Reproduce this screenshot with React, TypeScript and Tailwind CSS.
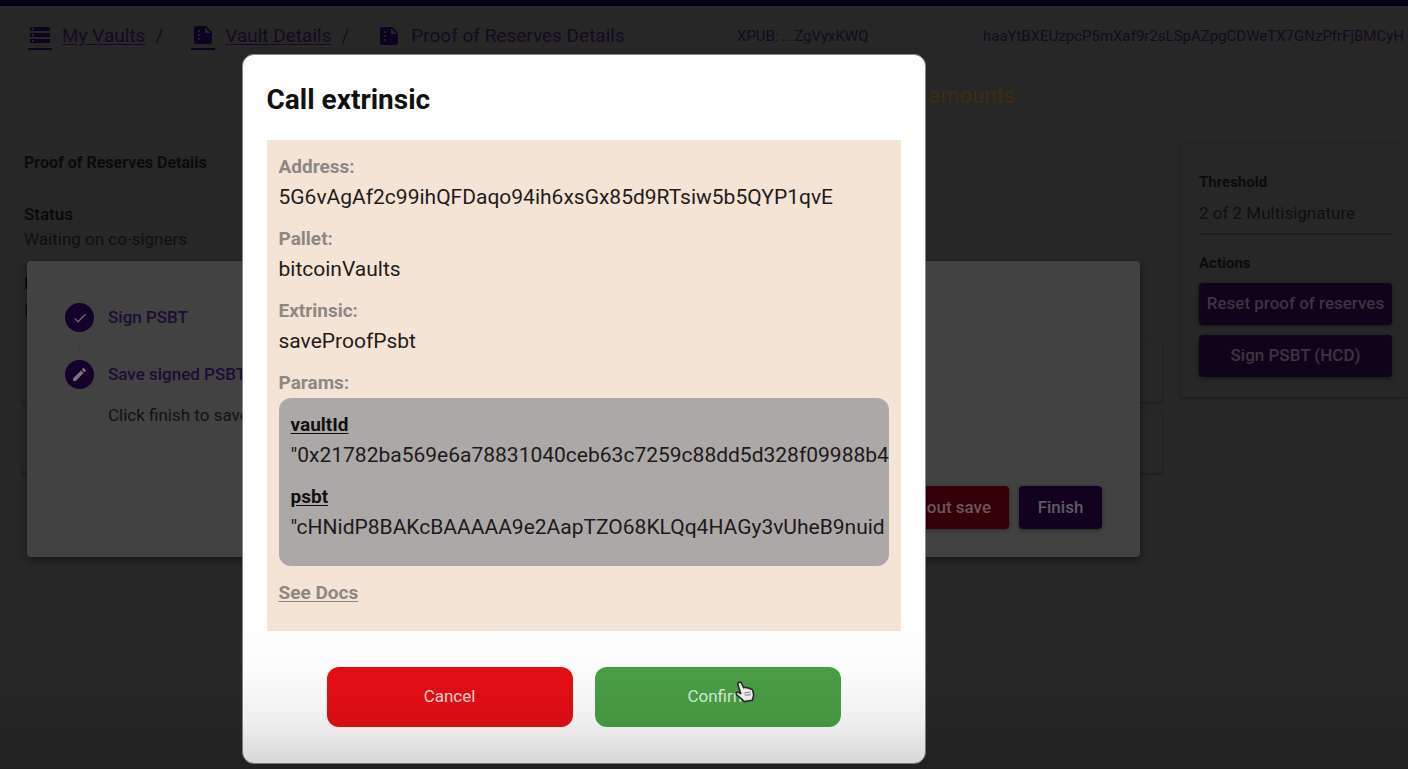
import React from "react";
import { MdStorage, MdSummarize, MdCheck, MdEdit } from "react-icons/md";

const details = [
  { label: "Address:", value: "5G6vAgAf2c99ihQFDaqo94ih6xsGx85d9RTsiw5b5QYP1qvE" },
  { label: "Pallet:", value: "bitcoinVaults" },
  { label: "Extrinsic:", value: "saveProofPsbt" },
];

const params = [
  { name: "vaultId", value: '"0x21782ba569e6a78831040ceb63c7259c88dd5d328f09988b4' },
  { name: "psbt", value: '"cHNidP8BAKcBAAAAA9e2AapTZO68KLQq4HAGy3vUheB9nuid' },
];

function Header() {
  return (
    <header className="flex h-12 items-center overflow-hidden whitespace-nowrap pl-7 pt-3 text-[#150a22]">
      <nav className="flex w-[709px] shrink-0 items-center text-[19px]">
        <a href="#vaults" className="flex items-center gap-[10px]">
          <span className="border-b-2 border-[#0c0320] pb-[1px] text-[#0c0320]">
            <MdStorage className="size-6" />
          </span>
          <span className="underline underline-offset-2">My Vaults</span>
        </a>
        <span className="ml-[10px]">/</span>
        <a href="#details" className="ml-7 flex items-center gap-[10px]">
          <span className="border-b-2 border-[#0c0320] pb-[1px] text-[#0c0320]">
            <MdSummarize className="size-6" />
          </span>
          <span className="underline underline-offset-2">Vault Details</span>
        </a>
        <span className="ml-[10px]">/</span>
        <span className="ml-7 flex items-center gap-[10px]">
          <MdSummarize className="size-6 text-[#0c0320]" />
          Proof of Reserves Details
        </span>
      </nav>
      <span className="w-[246px] shrink-0 text-[15px]">XPUB: ...ZgVyxKWQ</span>
      <span className="text-[15px]">haaYtBXEUzpcP5mXaf9r2sLSpAZpgCDWeTX7GNzPfrFjBMCyH</span>
    </header>
  );
}

function Sidebar() {
  return (
    <aside className="mt-[23px] h-[254px] w-[227px] shrink-0 rounded-l pl-[18px] pr-4 pt-[27px] shadow-[0_1px_4px_rgba(0,0,0,0.3)]">
      <h2 className="text-[15px] font-bold leading-6 text-[#0b0b0b]">Threshold</h2>
      <p className="mt-[5px] border-b-2 border-[#1c1c1c] pb-[6px] text-[17px] leading-7 text-[#0f0f0f]">
        2 of 2 Multisignature
      </p>
      <h2 className="mt-4 text-[15px] font-bold leading-6 text-[#0b0b0b]">Actions</h2>
      <div className="mt-2 flex flex-col gap-[10px]">
        {["Reset proof of reserves", "Sign PSBT (HCD)"].map((t) => (
          <button
            key={t}
            type="button"
            className="h-[42px] whitespace-nowrap rounded bg-[#10041a] text-[17px] font-medium text-[#3a3640] shadow-[0_1px_4px_rgba(0,0,0,0.5)]"
          >
            {t}
          </button>
        ))}
      </div>
    </aside>
  );
}

function Page() {
  return (
    <div>
      <div className="h-[6px] bg-[#05000f]" />
      <Header />
      <p className="pr-[393px] pt-7 text-right text-[22px] leading-7 text-[#3f2d0e]">amounts</p>
      <div className="flex pt-[10px]">
        <main className="min-w-0 flex-1 pl-[22px] pr-[19px] pt-[31px]">
          <div className="pl-[2px]">
            <h1 className="text-base font-bold leading-6 text-[#0b0b0b]">Proof of Reserves Details</h1>
            <h2 className="mt-[27px] text-[17px] font-medium leading-6 text-[#080808]">Status</h2>
            <p className="text-[17px] leading-[26px] text-[#0f0f0f]">Waiting on co-signers</p>
            <p className="mt-[19px] text-[17px] font-medium leading-6 text-[#080808]">I</p>
            <p className="text-[17px] leading-[30px] text-[#0f0f0f]">I</p>
          </div>
          <div className="mt-[13px] flex flex-col gap-[7px]">
            <div className="h-16 rounded shadow-[0_1px_3px_rgba(0,0,0,0.35)]" />
            <div className="h-16 rounded shadow-[0_1px_3px_rgba(0,0,0,0.35)]" />
          </div>
        </main>
        <Sidebar />
      </div>
    </div>
  );
}

function StepperDialog() {
  return (
    <section className="mt-[261px] flex h-[296px] w-full max-w-[1113px] flex-col justify-between rounded bg-[#424242] px-[38px] pb-7 pt-[42px] shadow-[0_3px_8px_rgba(0,0,0,0.4)]">
      <div className="text-[17px] font-medium text-[#1d0c33]">
        <div className="flex items-center gap-[14px]">
          <span className="flex size-[29px] items-center justify-center rounded-full bg-[#14022a] text-[#6a6570]">
            <MdCheck className="size-4" />
          </span>
          Sign PSBT
        </div>
        <div className="my-[10px] ml-[14px] h-2 w-px bg-[#3b3b3b]" />
        <div className="flex items-center gap-[14px]">
          <span className="flex size-[29px] items-center justify-center rounded-full bg-[#14022a] text-[#77727c]">
            <MdEdit className="size-[17px]" />
          </span>
          Save signed PSBT
        </div>
        <p className="ml-[43px] mt-[12px] text-[17px] font-normal leading-7 text-[#121212]">
          Click finish to save
        </p>
      </div>
      <div className="flex justify-end gap-[10px] text-[17px] font-medium">
        <button type="button" className="h-[43px] rounded bg-[#330008] px-[18px] text-[#6d5557] shadow-[0_1px_4px_rgba(0,0,0,0.4)]">
          without save
        </button>
        <button type="button" className="h-[43px] w-[83px] rounded bg-[#12021f] text-[#5f5a66] shadow-[0_1px_4px_rgba(0,0,0,0.4)]">
          Finish
        </button>
      </div>
    </section>
  );
}

function HandCursor() {
  return (
    <svg viewBox="0 0 20 22" className="absolute left-[140px] top-[14px] h-[22px] w-5" aria-hidden="true">
      <path
        d="M4.200 1.300c1.200-.4 2.100.2 2.500 1.200l1.900 4.200c.6-.7 1.800-.6 2.300.2.700-.7 1.800-.5 2.200.4.800-.5 1.900-.2 2.300.8 1-.2 2 .2 2.300 1.300l.8 3.600c.3 1.600 0 2.700-.6 3.700l-.6 2.600-8.300 1.300c-1-1.700-2.300-2.700-3.700-3.700l-3.500-3c-.8-.6-.9-1.700-.3-2.300.8-.8 1.900-.5 2.700.1l1.500.9L2.900 3.600c-.4-1 .1-1.900 1.300-2.300z"
        fill="#f4f4f4"
        stroke="#2b2b2b"
        strokeWidth="1.600"
        strokeLinejoin="round"
      />
      <path d="M9.300 11.800l6.200-.6M9.600 14.200l6.200-.6" stroke="#9a9a9a" strokeWidth="1.300" />
    </svg>
  );
}

function ExtrinsicDialog() {
  return (
    <section
      role="dialog"
      aria-labelledby="dialog-title"
      className="mt-[54px] w-full max-w-[684px] self-start rounded-xl border border-[#8a8a8a] bg-white px-6 pb-9 pt-[23px] text-black"
    >
      <h1 id="dialog-title" className="text-[28px] font-bold leading-[44px] text-[#111]">
        Call extrinsic
      </h1>
      <div className="mt-[18px] bg-[#f3e4d6] px-3 pb-[23px] pt-3">
        <dl>
          {details.map((d) => (
            <div key={d.label} className="mb-3">
              <dt className="text-[19px] font-bold leading-[30px] text-[#8d8883]">{d.label}</dt>
              <dd className="text-[21px] leading-[30px] text-[#1f1c1a]">{d.value}</dd>
            </div>
          ))}
        </dl>
        <h2 className="text-[19px] font-bold leading-[30px] text-[#8d8883]">Params:</h2>
        <dl className="overflow-hidden whitespace-nowrap rounded-xl bg-[#aca8a7] p-3">
          {params.map((p) => (
            <div key={p.name} className="mb-3">
              <dt className="text-[19px] font-bold leading-[30px] text-[#111] underline underline-offset-2">{p.name}</dt>
              <dd className="text-[21px] leading-[30px] text-[#1c1a1a]">{p.value}</dd>
            </div>
          ))}
        </dl>
        <a href="#docs" className="mt-3 block text-[19px] font-bold leading-[30px] text-[#8d8883] underline underline-offset-2">
          See Docs
        </a>
      </div>
      <div className="mt-9 flex justify-center gap-[22px] text-[17px]">
        <button type="button" className="h-[60px] w-[246px] rounded-xl bg-[#e60e15] text-[#fbd5d5]">
          Cancel
        </button>
        <button type="button" className="relative h-[60px] w-[246px] rounded-xl bg-[#4a9f46] text-[#d6f0d2]">
          Confirm
          <HandCursor />
        </button>
      </div>
    </section>
  );
}

export default function App() {
  return (
    <div className="relative h-screen overflow-hidden bg-[#272727] font-[Roboto,sans-serif]">
      <Page />
      <div className="absolute inset-0 flex items-start justify-center pl-[27px] pr-[268px]">
        <StepperDialog />
      </div>
      <div className="absolute inset-0 flex items-start justify-center pr-[241px]">
        <ExtrinsicDialog />
      </div>
      <div className="pointer-events-none absolute inset-x-0 bottom-0 h-[150px] bg-[linear-gradient(to_bottom,rgba(0,0,0,0)_0%,rgba(0,0,0,0.015)_35%,rgba(0,0,0,0.06)_67%,rgba(0,0,0,0.17)_100%)]" />
    </div>
  );
}
